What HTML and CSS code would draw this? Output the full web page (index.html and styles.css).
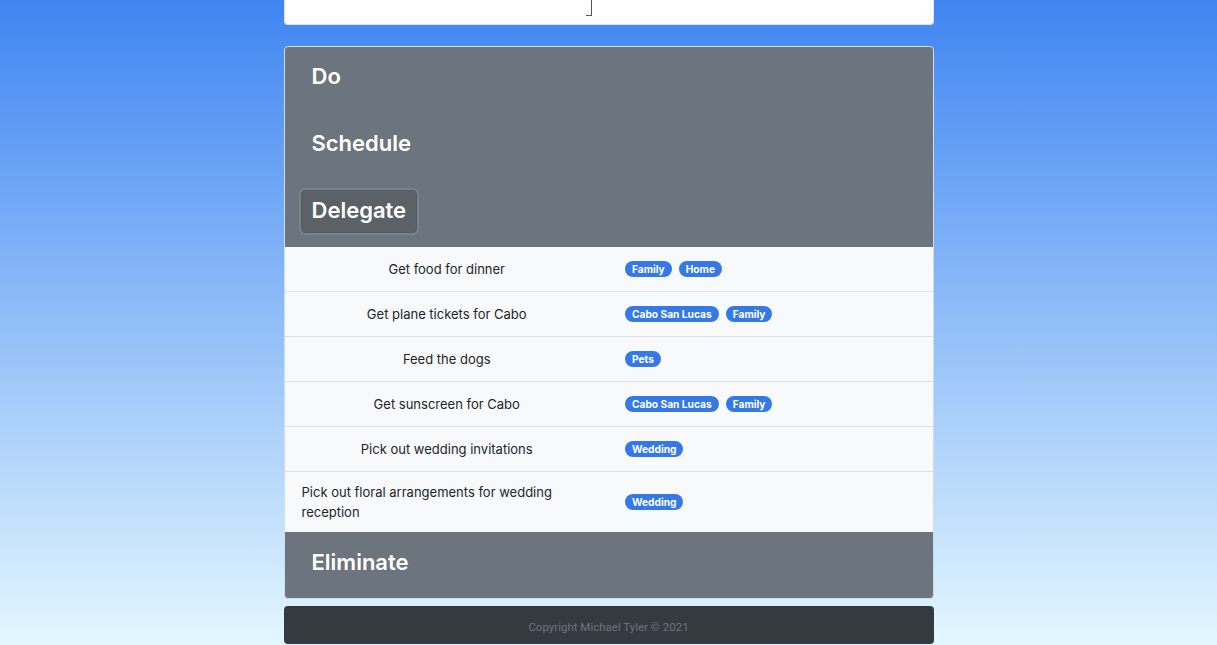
FILE: index.html
```html
<!DOCTYPE html>
<html>
<head>
<meta charset="utf-8">
<link rel="stylesheet" href="styles.css">
</head>
<body>
<div class="page">
  <div class="container">
    <div class="top-card"><span class="mark"></span></div>
    <div class="matrix">
      <div class="quad-head">
        <button class="quad-btn">Do</button>
        <button class="quad-btn">Schedule</button>
        <button class="quad-btn active">Delegate</button>
      </div>
      <table class="tasks">
        <tr><td class="task"><div class="task-in">Get food for dinner</div></td><td class="tags"><span class="badge">Family</span><span class="badge">Home</span></td></tr>
        <tr><td class="task"><div class="task-in">Get plane tickets for Cabo</div></td><td class="tags"><span class="badge">Cabo San Lucas</span><span class="badge">Family</span></td></tr>
        <tr><td class="task"><div class="task-in">Feed the dogs</div></td><td class="tags"><span class="badge">Pets</span></td></tr>
        <tr><td class="task"><div class="task-in">Get sunscreen for Cabo</div></td><td class="tags"><span class="badge">Cabo San Lucas</span><span class="badge">Family</span></td></tr>
        <tr><td class="task"><div class="task-in">Pick out wedding invitations</div></td><td class="tags"><span class="badge">Wedding</span></td></tr>
        <tr class="last"><td class="task"><div class="task-in">Pick out floral arrangements for wedding reception</div></td><td class="tags"><span class="badge">Wedding</span></td></tr>
      </table>
      <div class="quad-head single">
        <button class="quad-btn">Eliminate</button>
      </div>
    </div>
    <footer class="footer">Copyright Michael Tyler © 2021</footer>
  </div>
</div>
</body>
</html>
```

FILE: styles.css
```css
html, body {
  margin: 0;
  padding: 0;
}
body {
  height: 645px;
  overflow: hidden;
  background: linear-gradient(180deg, #3f85f1 0%, #e3f7ff 100%);
  font-family: Inter, "Noto Sans", sans-serif;
  color: #212529;
}
.page {
  height: 645px;
}
.container {
  width: 650px;
  margin: 0 auto;
  display: flex;
  flex-direction: column;
}
.top-card {
  height: 25px;
  background: #fff;
  border-radius: 0 0 4px 4px;
  box-sizing: border-box;
  border: 1px solid #d9e3f2;
  border-top: none;
}
.mark {
  display: block;
  width: 5px;
  height: 15px;
  margin-left: 301px;
  border-right: 1px solid #555;
  border-bottom: 1px solid #555;
}
.matrix {
  margin-top: 21px;
  border: 1px solid #cfdbee;
  border-radius: 4px;
  overflow: hidden;
  background: #6c757d;
}
.quad-head {
  display: flex;
  flex-direction: column;
  align-items: flex-start;
  gap: 24px;
  padding: 9px 16px 14px 16px;
}
.quad-head.single {
  padding-top: 10px;
  padding-bottom: 13px;
}
.quad-btn {
  font-family: Inter, "Noto Sans", sans-serif;
  font-size: 22px;
  font-weight: 600;
  line-height: 29px;
  color: #fff;
  background: #6c757d;
  border: 1px solid #6c757d;
  border-radius: 4px;
  padding: 5px 10px 7px;
  height: 43px;
  box-sizing: border-box;
  cursor: pointer;
}
.quad-btn.active {
  background: #5a6268;
  border-color: #545b62;
  box-shadow: 0 0 0 2px rgba(130, 138, 145, 0.6);
}
.tasks {
  width: 100%;
  border-collapse: collapse;
  table-layout: fixed;
  background: #f8f9fa;
}
.tasks td {
  width: 50%;
  height: 24px;
  padding: 10px 17px 10px 17px;
  border-bottom: 1px solid #dee2e6;
  font-size: 13px;
  line-height: 20px;
  vertical-align: middle;
}
.tasks tr.last td {
  border-bottom: none;
}
.task-in {
  display: flex;
  justify-content: center;
}
.tags {
  padding-left: 16px !important;
}
.badge {
  display: inline-block;
  font-size: 10.2px;
  font-weight: 700;
  line-height: 12px;
  color: #fff;
  background: #3579e6;
  border-radius: 10px;
  padding: 2px 7px;
  margin-right: 7px;
  vertical-align: middle;
  position: relative;
  top: -1px;
}
.footer {
  margin-top: 7px;
  height: 38px;
  box-sizing: border-box;
  padding-top: 3px;
  background: #343a40;
  border-radius: 4px;
  color: #6c757d;
  font-family: Roboto, "Liberation Sans", sans-serif;
  font-size: 11.5px;
  display: flex;
  align-items: center;
  justify-content: center;
}
```
